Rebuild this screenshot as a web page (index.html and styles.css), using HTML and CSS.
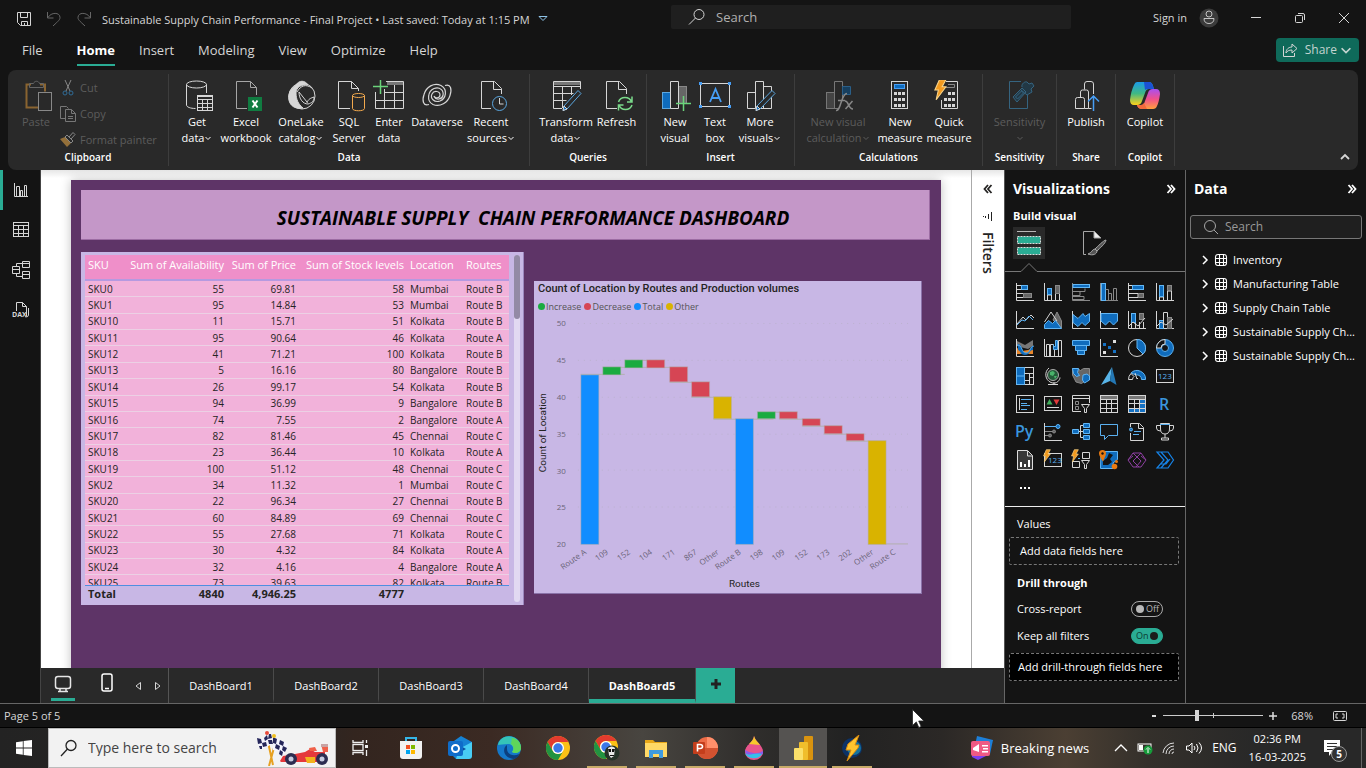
FILE: index.html
```html
<!DOCTYPE html>
<html lang="en">
<head>
<meta charset="utf-8">
<title>Sustainable Supply Chain Performance - Final Project</title>
<link rel="stylesheet" href="styles.css">
</head>
<body>
<svg class="defs" width="0" height="0" aria-hidden="true">
  <symbol id="chev" viewBox="0 0 8 8"><path d="M1.500 3l2.500 2.500L6.500 3" fill="none" stroke="currentColor" stroke-width="1"/></symbol>
  <symbol id="dbl" viewBox="0 0 10 10"><path d="M1.500 1l3.500 4-3.500 4M5 1l3.500 4-3.500 4" fill="none" stroke="currentColor" stroke-width="1.800"/></symbol>
  <symbol id="right" viewBox="0 0 8 10"><path d="M2 1l4 4-4 4" fill="none" stroke="currentColor" stroke-width="1.500"/></symbol>
  <symbol id="grid" viewBox="0 0 14 14"><g fill="none" stroke="currentColor" stroke-width="1.100"><rect x="1.500" y="1.500" width="11" height="11" rx="2.500"/><path d="M5.500 1.500v11M9.500 1.500v11M1.500 5.500h11M1.500 9.500h11"/></g></symbol>
  <symbol id="bolt" viewBox="0 0 12 20"><path d="M5 0.500h6L7.500 7H11L2 19l2-9H.8z" fill="#f29a1f" stroke="#f8d48a" stroke-width="1"/></symbol>
  <symbol id="chrome" viewBox="0 0 24 24"><circle cx="12" cy="12" r="12" fill="#fbc116"/><path d="M1.600 6A12 12 0 0 1 22.400 6H12a6 6 0 0 0-5.200 9z" fill="#e33b2e"/><path d="M1.600 6A12 12 0 0 0 12 24l5.200-9A6 6 0 0 1 6.800 15z" fill="#229342"/><circle cx="12" cy="12" r="6" fill="#fff"/><circle cx="12" cy="12" r="4.700" fill="#3b78e7"/></symbol>
</svg>

<header class="titlebar">
  <div class="title-left">
    <button class="plain" aria-label="Save"><svg width="16" height="16" class="ln"><path d="M1.500 1.500h13v13h-10l-3-3zM4.500 1.500v5h7v-5M5.500 14.500v-4h6v4M8.500 12v2"/></svg></button>
    <button class="plain dim" aria-label="Undo"><svg width="16" height="16" class="ln"><path d="M1.500 1v6h6M2 6.500C5 1 14 1 14 6.500c0 2-1 3-7 8.500"/></svg></button>
    <button class="plain dim" aria-label="Redo"><svg width="16" height="16" class="ln"><path d="M14.500 1v6h-6M14 6.500C11 1 2 1 2 6.500c0 2 1 3 7 8.500"/></svg></button>
    <span class="doc-title">Sustainable Supply Chain Performance - Final Project • Last saved: Today at 1:15 PM</span>
    <svg width="10" height="8" class="ln accent"><path d="M1 1.500h8L5 5.500z"/></svg>
  </div>
  <label class="top-search"><svg width="18" height="18" class="ln"><circle cx="11" cy="6.500" r="5"/><path d="M7.500 10L1 16.500"/></svg><input type="search" placeholder="Search" aria-label="Search"></label>
  <div class="title-right">
    <button class="plain sign">Sign in</button>
    <svg width="20" height="20" class="avatar"><circle cx="10" cy="10" r="9.500" fill="#3b3b3b"/><g fill="none" stroke="#c4c4c4"><circle cx="10" cy="6" r="3"/><path d="M5 10.500h10c0 3.500-2 5-5 5s-5-1.500-5-5z"/></g></svg>
    <button class="plain win" aria-label="Minimize"><svg width="12" height="12" class="ln"><path d="M1 5.500h10"/></svg></button>
    <button class="plain win" aria-label="Restore"><svg width="12" height="12" class="ln"><rect x="1.500" y="3.500" width="7" height="7" rx="1"/><path d="M4 1.500h5q1.500 0 1.500 1.500v5"/></svg></button>
    <button class="plain win" aria-label="Close"><svg width="12" height="12" class="ln"><path d="M1 1l10 10M11 1L1 11"/></svg></button>
  </div>
</header>

<nav class="menu">
  <a href="#" class="file">File</a><a href="#" class="on">Home</a><a href="#">Insert</a><a href="#">Modeling</a><a href="#">View</a><a href="#">Optimize</a><a href="#">Help</a>
  <button class="share"><svg width="16" height="16" class="ln"><path d="M1.500 4v10.500h11V11M4 11c0-4 3-6 6-6V2l5 4.500-5 4.500V8c-3 0-5 1-6 3z"/></svg>Share<svg width="14" height="14"><use href="#chev"/></svg></button>
</nav>

<section class="ribbon" aria-label="Ribbon">
  <div class="group g-clip">
    <div class="tools">
      <button class="tool w-paste off"><svg width="32" height="32" fill="none"><path d="M11 4.500H6.500v23h12M20 4.500h5v7" stroke="#8a6430" stroke-width="2"/><path d="M9.500 7.500v-4h4c1-3 5-3 6 0h4v4z" stroke="#666"/><rect x="18.500" y="12.500" width="13" height="18" fill="#292929" stroke="#888"/></svg><span>Paste</span></button>
      <div class="clip-list">
        <button class="plain"><svg width="16" height="16" fill="none"><path d="M5 0l5 11M11 0L6 11" stroke="#888"/><g stroke="#2f6b96"><circle cx="5" cy="13" r="2"/><circle cx="11" cy="13" r="2"/></g></svg>Cut</button>
        <button class="plain"><svg width="16" height="16" fill="none" stroke="#777"><path d="M5 12.500H.5V.5h6l2 2M5.500 3.500h6l4 4v8h-10zM11.500 3.500v4h4M8 10.500h5M8 12.500h5"/></svg>Copy</button>
        <button class="plain"><svg width="16" height="16" fill="none"><path d="M0 7l5-2 6 6-4 4z" fill="#94703a"/><path d="M5 5l2-2 6 6-2 2zM9 5l4-4.500 2 2L11 7" stroke="#888"/></svg>Format painter</button>
      </div>
    </div>
    <div class="gname">Clipboard</div>
  </div>
  <div class="group g-data">
    <div class="tools">
      <button class="tool w42"><svg width="32" height="32" class="ln"><ellipse cx="15.500" cy="4.500" rx="10" ry="3.500"/><path d="M5.500 4.500V25c0 2 4 3.500 9 3.500M25.500 4.500V13"/><rect x="16.500" y="15.500" width="15" height="15" fill="#292929"/><path d="M16.500 16.500h15M16.500 19.500h15M16.500 23.500h15M16.500 27.500h15M21.500 19v11M26.500 19v11"/></svg><span>Get<br>data<svg class="chev"><use href="#chev"/></svg></span></button>
      <button class="tool w56"><svg width="32" height="32" class="ln gray"><path d="M17 28.500H6.500v-27h14l6 6V15M20.500 1.500v6h6"/><rect x="18" y="17" width="14" height="14" fill="#107c41" stroke="none"/><path d="M22.500 20.500l5 7M27.500 20.500l-5 7" stroke="#fff" stroke-width="2"/></svg><span>Excel<br>workbook</span></button>
      <button class="tool w54"><svg width="32" height="32" class="ln"><circle cx="17" cy="16" r="13"/><path d="M11 5C14 0 20 0 23 5c-6-1-12 2-12 8 0 6 2 11 7 15C8 30 2 23 4 14c1-4 4-7 7-9z" fill="#d6d6d6"/><path d="M12 12c4-7 9-8 15-4M14 12c0 7 4 12 9 12 4-1 6-3 6-7-3 1-6 2-7 6M14 12l8 10"/></svg><span>OneLake<br>catalog<svg class="chev"><use href="#chev"/></svg></span></button>
      <button class="tool w42"><svg width="32" height="32" class="ln"><path d="M17 28.500H5.500v-27h13l7 7V11M18.500 1.500v7h7"/><g stroke="#f2a94e"><ellipse cx="25.500" cy="15.500" rx="6" ry="2"/><path d="M19.500 15.500v13c0 3 12 3 12 0v-13"/></g></svg><span>SQL<br>Server</span></button>
      <button class="tool w38"><svg width="32" height="32" class="ln"><path d="M13 1.500h17.500v27H2.500V12M3 20.500h27M11 12.500h19M11.500 9v19M21.500 5v23"/><path d="M14 3.500h16" stroke="#777" stroke-width="3"/><path d="M0 6.500h15M7.500 0v14" stroke="#6bd47b" stroke-width="1.500"/></svg><span>Enter<br>data</span></button>
      <button class="tool w58"><svg width="32" height="32" class="ln"><path d="M8 24.500c-6 2-7-4-5-10C5 7 13 2 20 5.500c7 4 5 13-1 15.500-6 2-10-3-8-7 2-4 8-3 8 1 0 3-5 4-6 1M24 5.500c6-2 7 4 5 10-2 7-10 12-17 9C5 21 7 11 13 8.500c6-2 10 2 9 7-1 4-7 5-9 1" stroke-width="1.200"/></svg><span>Dataverse</span></button>
      <button class="tool w50"><svg width="32" height="32" class="ln"><path d="M16 28.500H6.500v-27h13l7 7V14M18.500 1.500v8h8"/><g stroke="#5ba7e0"><circle cx="24.500" cy="23.500" r="7"/></g><path d="M24.500 18v6h4"/></svg><span>Recent<br>sources<svg class="chev"><use href="#chev"/></svg></span></button>
    </div>
    <div class="gname">Data</div>
  </div>
  <div class="group g-query">
    <div class="tools">
      <button class="tool w54"><svg width="32" height="32" class="ln"><path d="M12 28.500H3.500v-27h27V9" /><path d="M4 3.500h26" stroke="#777" stroke-width="3"/><path d="M3.500 6.500h27M3.500 13.500h20M3.500 20.500h13M12.500 6v22M21.500 6v9"/><path d="M14 26L28 10.500l3 3L17 29l-4 1.500z" stroke="#5ba7e0" fill="#292929"/><path d="M14 26l3 3-4 1.500z" fill="#0f6cbd"/></svg><span>Transform<br>data<svg class="chev"><use href="#chev"/></svg></span></button>
      <button class="tool w47"><svg width="32" height="32" class="ln"><path d="M16 28.500H5.500v-27h13l7 7V14M17.500 1.500v8h8"/><g stroke="#7ad98a" stroke-width="1.500"><path d="M17.500 22c2-6 11-6 13 0M31 16.500V22h-5M31 25c-2 6-11 6-13 0M17.500 30.500V25h5"/></g></svg><span>Refresh</span></button>
    </div>
    <div class="gname">Queries</div>
  </div>
  <div class="group g-insert">
    <div class="tools">
      <button class="tool w40"><svg width="32" height="32" class="ln"><rect x="3.500" y="12.500" width="8" height="16" fill="#0f6cbd" stroke="#5ba7e0"/><rect x="19.500" y="6.500" width="8" height="17" fill="#666" stroke="#888"/><path d="M11.500 28.500v-27h8v27z" fill="#292929"/><path d="M17 23.500h15M24.500 16v15" stroke="#6bd47b" stroke-width="1.500"/></svg><span>New<br>visual</span></button>
      <button class="tool w40"><svg width="32" height="32" class="ln"><rect x="1.500" y="3.500" width="29" height="23"/><path d="M11 22l5.500-13L22 22M13 18h7" stroke="#479ef5" stroke-width="1.800"/><g fill="#479ef5" stroke="none"><path d="M0 2h3v3H0zM29 2h3v3h-3zM0 25h3v3H0zM29 25h3v3h-3z"/></g></svg><span>Text<br>box</span></button>
      <button class="tool w50"><svg width="32" height="32" class="ln"><path d="M3.500 28.500v-16h8v16zM11.500 28.500v-27h8v27M19.500 6.500h8v22h-14"/><path d="M13 26L28 10.500l3 3L16 29l-4 1.500z" stroke="#5ba7e0" fill="#292929"/><path d="M13 26l3 3-4 1.500z" fill="#0f6cbd"/></svg><span>More<br>visuals<svg class="chev"><use href="#chev"/></svg></span></button>
    </div>
    <div class="gname">Insert</div>
  </div>
  <div class="group g-calc">
    <div class="tools">
      <button class="tool w74 off"><svg width="32" height="32" class="ln"><g stroke="#777"><rect x="4.500" y="12.500" width="8" height="16" fill="#444"/><path d="M16 28.500h-3.500v-27h8v17"/></g><path d="M20.500 6.500h8v8h-8z" fill="#173f5f" stroke="#2a5f88"/><path d="M14 30.500c5 1 5-17 11-17M16 20.500h7M23 21c4 0 3 8 8 8M30.500 21l-7 8" stroke="#888" stroke-width="1.500"/></svg><span>New visual<br>calculation<svg class="chev"><use href="#chev"/></svg></span></button>
      <button class="tool w50"><svg width="32" height="32" class="ln"><rect x="7.500" y="1.500" width="16" height="27"/><rect x="10.500" y="4.500" width="10" height="4" fill="#0f6cbd" stroke="#479ef5"/><path d="M10 13.500h3m1 0h3m1 0h3M10 19.500h3m1 0h3m1 0h3M10 25.500h3m1 0h3m1 0h3" stroke-width="3"/></svg><span>New<br>measure</span></button>
      <button class="tool w48"><svg width="32" height="32" class="ln"><path d="M13 1.500h11.500v27h-16V20"/><path d="M13 7.500h8.500v-3H15" stroke="#888"/><path d="M15 13.500h3m1 0h3M11 19.500h3m1 0h3m1 0h3M11 25.500h3m1 0h3m1 0h3" stroke-width="3"/><use href="#bolt" x="1" y="-1" width="13" height="22" stroke="none"/></svg><span>Quick<br>measure</span></button>
    </div>
    <div class="gname">Calculations</div>
  </div>
  <div class="group g-sens">
    <div class="tools center">
      <button class="tool off"><svg width="32" height="32" fill="none" stroke="#356480"><path d="M17 1.500H5.500v27h18V15"/><path d="M9 17l9-9 4 4-9 10zM11.500 17l6-6 2 2-6 6zM18 7c-1-3 3-6 5-5l2 2 3-1 2 3-3 3 1 3-5 3-6-5" fill="#223845"/></svg><span>Sensitivity<br><svg class="chev"><use href="#chev"/></svg></span></button>
    </div>
    <div class="gname">Sensitivity</div>
  </div>
  <div class="group g-one">
    <div class="tools center">
      <button class="tool"><svg width="32" height="32" class="ln"><path d="M5.500 28.500v-9q0-2 2-2h5q2 0 2 2v9zM10.500 17v-5q0-2 2-2h4q2 0 2 2v16.500h-4M14.500 9.500V4q0-2.500 2.500-2.500h4Q23.500 1.500 23.500 4v10M18.500 28.500h3"/><path d="M23.500 31V16M18 21.500l5.500-5.500 5.500 5.500" stroke="#479ef5" stroke-width="1.500"/></svg><span>Publish</span></button>
    </div>
    <div class="gname">Share</div>
  </div>
  <div class="group g-one">
    <div class="tools center">
      <button class="tool"><svg width="32" height="32"><defs><linearGradient id="cpa" x1="0" y1="0" x2="0" y2="1"><stop offset="0" stop-color="#1a9ae8"/><stop offset=".5" stop-color="#3fb984"/><stop offset="1" stop-color="#ffd21a"/></linearGradient><linearGradient id="cpb" x1="0" y1="0" x2="0" y2="1"><stop offset="0" stop-color="#a94ff0"/><stop offset=".5" stop-color="#f0508c"/><stop offset="1" stop-color="#ffa03c"/></linearGradient></defs><path d="M8 2h12q3 0 4 4l1 3h-5q-3 0-4 4l-3 8q-1 4-5 4H5q-4 0-4-5 1-9 4-15 1-3 3-3z" fill="url(#cpa)"/><path d="M24 29H13q-4 0-5-4h4q3 0 4-4l3-8q1-4 5-4h3q4 0 4 5-1 8-3 12-1 3-4 3z" fill="url(#cpb)"/><path d="M15 2h5q3 0 4 4l1 3h-5q-3 0-4 1z" fill="#1b51d4"/><path d="M8 25h4q2 0 3-2l3 6h-5q-4 0-5-4z" fill="#f36a3c"/></svg><span>Copilot</span></button>
    </div>
    <div class="gname">Copilot</div>
  </div>
  <button class="plain collapse" aria-label="Collapse ribbon"><svg width="10" height="10" class="ln"><path d="M1 7l4-4 4 4" stroke-width="1.800"/></svg></button>
</section>

<main class="work">
  <nav class="views">
    <button class="plain on" aria-label="Report view"><svg width="18" height="18" class="ln"><path d="M2.500 2v13.500H16M4.500 15V5.500h3V15M8.500 15V9.500h2V15M12.500 15V4.500h2V15"/></svg></button>
    <button class="plain" aria-label="Table view"><svg width="18" height="18" class="ln"><rect x="1.500" y="1.500" width="15" height="14"/><path d="M1.500 4.500h15M1.500 8.500h15M1.500 12.500h15M6.500 4v11M11.500 4v11"/></svg></button>
    <button class="plain" aria-label="Model view"><svg width="20" height="20" class="ln"><path d="M1.500 6.500h7v7h-7zM1.500 9.500h7M11.500 1.500h7v6h-7zM11.500 3.500h7M11.500 11.500h7v7h-7zM11.500 14.500h7M5.500 6V3.500h6M5.500 14v2.500h6"/></svg></button>
    <button class="plain" aria-label="DAX query view"><svg width="20" height="20" class="ln"><path d="M5.500 11V2.500h6l4 4V16M11.500 2.500v4h4M17.500 8v7q0 2-3 2"/><text x="1" y="17" class="dax">DAX</text></svg></button>
  </nav>

  <div class="center-col">
    <div class="stage">
      <div class="canvas">
        <article class="report">
          <h1 class="banner">SUSTAINABLE SUPPLY  CHAIN PERFORMANCE DASHBOARD</h1>
          <div class="visuals">
            <section class="tbl-visual">
              <div class="tbl-scroll">
                <table>
                  <colgroup><col class="c1"><col class="c2"><col class="c3"><col class="c4"><col class="c5"><col class="c6"></colgroup>
                  <thead><tr><th class="l">SKU</th><th>Sum of Availability</th><th>Sum of Price</th><th>Sum of Stock levels</th><th class="l">Location</th><th class="l">Routes</th></tr></thead>
                  <tbody>
                    <tr><td>SKU0</td><td>55</td><td>69.81</td><td>58</td><td>Mumbai</td><td>Route B</td></tr>
                    <tr><td>SKU1</td><td>95</td><td>14.84</td><td>53</td><td>Mumbai</td><td>Route B</td></tr>
                    <tr><td>SKU10</td><td>11</td><td>15.71</td><td>51</td><td>Kolkata</td><td>Route B</td></tr>
                    <tr><td>SKU11</td><td>95</td><td>90.64</td><td>46</td><td>Kolkata</td><td>Route A</td></tr>
                    <tr><td>SKU12</td><td>41</td><td>71.21</td><td>100</td><td>Kolkata</td><td>Route B</td></tr>
                    <tr><td>SKU13</td><td>5</td><td>16.16</td><td>80</td><td>Bangalore</td><td>Route B</td></tr>
                    <tr><td>SKU14</td><td>26</td><td>99.17</td><td>54</td><td>Kolkata</td><td>Route B</td></tr>
                    <tr><td>SKU15</td><td>94</td><td>36.99</td><td>9</td><td>Bangalore</td><td>Route B</td></tr>
                    <tr><td>SKU16</td><td>74</td><td>7.55</td><td>2</td><td>Bangalore</td><td>Route A</td></tr>
                    <tr><td>SKU17</td><td>82</td><td>81.46</td><td>45</td><td>Chennai</td><td>Route C</td></tr>
                    <tr><td>SKU18</td><td>23</td><td>36.44</td><td>10</td><td>Kolkata</td><td>Route A</td></tr>
                    <tr><td>SKU19</td><td>100</td><td>51.12</td><td>48</td><td>Chennai</td><td>Route C</td></tr>
                    <tr><td>SKU2</td><td>34</td><td>11.32</td><td>1</td><td>Mumbai</td><td>Route C</td></tr>
                    <tr><td>SKU20</td><td>22</td><td>96.34</td><td>27</td><td>Chennai</td><td>Route B</td></tr>
                    <tr><td>SKU21</td><td>60</td><td>84.89</td><td>69</td><td>Chennai</td><td>Route C</td></tr>
                    <tr><td>SKU22</td><td>55</td><td>27.68</td><td>71</td><td>Kolkata</td><td>Route C</td></tr>
                    <tr><td>SKU23</td><td>30</td><td>4.32</td><td>84</td><td>Kolkata</td><td>Route A</td></tr>
                    <tr><td>SKU24</td><td>32</td><td>4.16</td><td>4</td><td>Bangalore</td><td>Route A</td></tr>
                    <tr><td>SKU25</td><td>73</td><td>39.63</td><td>82</td><td>Kolkata</td><td>Route B</td></tr>
                  </tbody>
                  <tfoot><tr><td>Total</td><td>4840</td><td>4,946.25</td><td>4777</td><td></td><td></td></tr></tfoot>
                </table>
              </div>
              <div class="track"><div class="thumb"></div></div>
            </section>
            <section class="chart-visual">
              <h2>Count of Location by Routes and Production volumes</h2>
              <ul class="legend"><li class="inc">Increase</li><li class="dec">Decrease</li><li class="tot">Total</li><li class="oth">Other</li></ul>
              <svg class="chart" viewBox="0 36 388 276" role="img" aria-label="Waterfall chart">
                <g class="gridline"><path d="M44 42.500h332M44 79.500h332M44 116.500h332M44 153.500h332M44 189.500h332M44 226.500h332"/></g>
                <g class="ylab"><text x="32" y="45">50</text><text x="32" y="82">45</text><text x="32" y="119">40</text><text x="32" y="156">35</text><text x="32" y="193">30</text><text x="32" y="230">25</text><text x="32" y="267">20</text></g>
                <path class="link" d="M47 93.500h44M69 86.500h44M91 79.500h40M114 86.500h40M136 101.500h40M158 116.500h40M180 138.500h60M224 131.500h40M246 138.500h40M269 145.500h40M291 153.500h40M313 160.500h40M335 263.500h40"/>
                <g class="tot"><rect x="47" y="94" width="18" height="170"/><rect x="202" y="138" width="18" height="126"/></g>
                <g class="inc"><rect x="69" y="86" width="18" height="8"/><rect x="91" y="79" width="18" height="8"/><rect x="224" y="131" width="18" height="7"/></g>
                <g class="dec"><rect x="113" y="79" width="18" height="8"/><rect x="136" y="86" width="18" height="15"/><rect x="158" y="101" width="18" height="15"/><rect x="246" y="131" width="18" height="7"/><rect x="269" y="138" width="18" height="7"/><rect x="291" y="145" width="18" height="8"/><rect x="313" y="153" width="18" height="7"/></g>
                <g class="oth"><rect x="180" y="116" width="18" height="22"/><rect x="335" y="160" width="18" height="104"/></g>
                <g class="xlab">
                  <text transform="translate(53 273) rotate(-35)">Route A</text><text transform="translate(75 273) rotate(-35)">109</text><text transform="translate(97 273) rotate(-35)">152</text><text transform="translate(119 273) rotate(-35)">104</text><text transform="translate(142 273) rotate(-35)">171</text><text transform="translate(164 273) rotate(-35)">867</text><text transform="translate(186 273) rotate(-35)">Other</text><text transform="translate(208 273) rotate(-35)">Route B</text><text transform="translate(230 273) rotate(-35)">198</text><text transform="translate(252 273) rotate(-35)">109</text><text transform="translate(275 273) rotate(-35)">152</text><text transform="translate(297 273) rotate(-35)">173</text><text transform="translate(319 273) rotate(-35)">202</text><text transform="translate(341 273) rotate(-35)">Other</text><text transform="translate(363 273) rotate(-35)">Route C</text>
                </g>
                <text class="axis" x="211" y="307">Routes</text>
                <text class="axis" transform="translate(12 152) rotate(-90)">Count of Location</text>
              </svg>
            </section>
          </div>
        </article>
      </div>
      <aside class="filters">
        <button class="plain" aria-label="Expand filters"><svg width="10" height="10" class="flip"><use href="#dbl"/></svg></button>
        <svg width="10" height="10" fill="none" stroke="#222"><path d="M8.500 0v9M5.500 2v5M2.500 4v2M0 4.500h1"/></svg>
        <span>Filters</span>
      </aside>
    </div>
    <div class="tabs">
      <div class="tab-tools">
        <button class="plain desk" aria-label="Desktop layout"><svg width="18" height="18" fill="none" stroke="#e6e6e6" stroke-width="1.500"><rect x="1.500" y="1.500" width="15" height="12" rx="2.500"/><path d="M6 14v2M12 14v2M4 16.500h10"/></svg></button>
        <button class="plain phone" aria-label="Mobile layout"><svg width="12" height="20" fill="none" stroke="#fff" stroke-width="1.500"><rect x="1" y="1" width="10" height="17" rx="2"/><path d="M4 15.500h4"/></svg></button>
        <button class="plain" aria-label="Previous page"><svg width="6" height="10" class="ln"><path d="M5.500 1.500v7L1 5z"/></svg></button>
        <button class="plain" aria-label="Next page"><svg width="6" height="10" class="ln"><path d="M.5 1.500v7L5 5z"/></svg></button>
      </div>
      <button class="tab">DashBoard1</button><button class="tab">DashBoard2</button><button class="tab">DashBoard3</button><button class="tab">DashBoard4</button><button class="tab on">DashBoard5</button>
      <button class="add" aria-label="New page"><svg width="12" height="12"><path d="M6 1v10M1 6h10" stroke="#222" stroke-width="3"/></svg></button>
    </div>
  </div>

  <aside class="pane viz">
    <header><h2>Visualizations</h2><button class="plain" aria-label="Collapse"><svg width="10" height="10"><use href="#dbl"/></svg></button></header>
    <h3>Build visual</h3>
    <div class="modes">
      <button class="plain on" aria-label="Build visual"><svg width="32" height="32" fill="none"><path d="M4 4.500h19" stroke="#b8b8b8"/><g fill="#2aac94" stroke="#ddd" stroke-dasharray="2 1"><rect x="4.500" y="9.500" width="23" height="7"/><rect x="4.500" y="20.500" width="23" height="7"/></g></svg></button>
      <button class="plain" aria-label="Format visual"><svg width="32" height="32" class="ln gray"><path d="M9 27.500H6.500v-23h11l6 6"/><path d="M17 4l7 7h-7z" fill="#eee"/><path d="M29 13c-2 0-9 7-11 9l2 2c2-2 9-8 9-11zM18 22c-3 0-3 4-7 5 5 2 9 0 9-3" fill="#555"/></svg></button>
    </div>
    <svg class="notch" viewBox="0 0 180 12" preserveAspectRatio="xMinYMin slice" fill="none" stroke="#777"><path d="M0 8.500h16l8-8 8 8h400"/></svg>
    <div class="gallery">
      <svg viewBox="0 0 18 18"><path class="w" d="M.5 0v17.500H18"/><rect class="f" x="5.500" y="2.500" width="6" height="4"/><path class="w" d="M1 2.500h4M1 6.500h4M1 10.500h6M1 14.500h6"/><rect class="g" x="7.500" y="10.500" width="8" height="4"/></svg>
      <svg viewBox="0 0 18 18"><path class="w" d="M.5 0v17.500H18M3.500 17v-5h4v5M11.500 17V9h4v8"/><rect class="f" x="3.500" y="5.500" width="4" height="6"/><rect class="g" x="11.500" y="2.500" width="4" height="8"/></svg>
      <svg viewBox="0 0 18 18"><path class="w dimw" d="M.5 0v17.500H18"/><rect class="f" x="1" y="1.500" width="16.500" height="3"/><path class="g2" d="M1 8.500h12v-3M1 12.500h7v-4M1 16.500h11v-3H1"/></svg>
      <svg viewBox="0 0 18 18"><path class="w dimw" d="M.5 0v17.500H18"/><rect class="f" x="1.500" y=".5" width="4" height="17"/><path class="g2" d="M5.500 6.500h3V17M8.500 10.500h3V17M13.500 17V5.500h3V17"/></svg>
      <svg viewBox="0 0 18 18"><path class="w" d="M.5 0v17.500H18"/><rect class="f" x="4.500" y="2.500" width="11" height="4"/><path class="w" d="M1 2.500h3M1 6.500h3M1 10.500h9v4H1"/><rect class="g" x="10.500" y="10.500" width="5" height="4"/></svg>
      <svg viewBox="0 0 18 18"><path class="w" d="M.5 0v17.500H18M3.500 17v-3h4v3M11.500 17V8h4v9"/><rect class="f" x="3.500" y="2.500" width="4" height="11"/><rect class="g" x="11.500" y="2.500" width="4" height="5"/></svg>

      <svg viewBox="0 0 18 18"><path class="w" d="M.5 0v17.500H18M1 13l6-7 3 3 5-5 3 3"/><path class="b" d="M1 14l5-5 3 1 4-5 4 4"/></svg>
      <svg viewBox="0 0 18 18"><path class="g" d="M9 9l4-8 4.500 9v7z"/><path class="w" d="M.5 11L7 1l6 9"/><path class="f" d="M.5 17.500v-4l4-4 4 3 3-3 6 8z"/></svg>
      <svg viewBox="0 0 18 18"><path class="w" d="M.5 0v17.500H18"/><path class="f" d="M1 3.500l5 4 5-5 2 3 4.500-3v8l-4.500 4-3-3-4 4-5-4z"/></svg>
      <svg viewBox="0 0 18 18"><path class="w" d="M.5 0v17.500H18"/><path class="f" d="M1 2.500h16.500V10l-4 4-4-4-4 4L1 10z"/></svg>
      <svg viewBox="0 0 18 18"><path class="w" d="M.5 0v17.500H18M3.500 17v-5M7.500 17v-5M11.500 17v-6M15.500 17v-6"/><rect class="f" x="3.500" y="2.500" width="4" height="9"/><rect class="g" x="11.500" y="2.500" width="4" height="6"/><path class="w" d="M1 15l4-4 5 4 7-8"/></svg>
      <svg viewBox="0 0 18 18"><path class="w" d="M.5 0v17.500H18"/><rect class="f" x="3.500" y="9.500" width="4" height="8"/><path class="w" d="M7.500 17V1.500h4V17"/><rect class="g" x="11.500" y="6.500" width="4" height="11"/><path class="w" d="M1 15l4-4 5 3 7-6"/></svg>

      <svg viewBox="0 0 18 18"><path d="M1 2l8 4 8-5v6l-5 3-4-1-7-2z" fill="#777"/><path d="M1 9l5 3 6-1 5-2v6H1z" fill="#e8862a"/><path d="M2 5c5 0 3 9 8 9s3-6 7-7v4c-4 0-3 5-8 5S5 12 2 11z" fill="#0f6cbd"/><path class="b" d="M1 6c6 0 4 8 9 8s3-6 8-7"/><path class="w" d="M.5 0v17.500H18"/></svg>
      <svg viewBox="0 0 18 18"><path class="w" d="M.5 0v17.500H18M2.500 17V5.500h3V17M6.500 17V5.500h3M10.500 17v-6M14.500 17V1.500h3V17"/><path class="f" d="M9.500 5.500v5h4v-9h-2v6h-2z"/></svg>
      <svg viewBox="0 0 18 18"><path class="f" d="M.5 1.500h17v5H.5zM3.500 6.500h11v5h-11zM5.500 11.500h7v4h-7z"/></svg>
      <svg viewBox="0 0 18 18"><path class="w" d="M.5 0v17.500H18"/><path d="M3 4h3v3H3zM8 7h3v3H8zM13 11h3v3h-3z" fill="#1672c4"/><path d="M13 1h3v3h-3zM3 12h3v3H3z" fill="#ddd"/></svg>
      <svg viewBox="0 0 18 18"><circle class="w" cx="9" cy="9" r="8.500"/><path class="f" d="M9 .5A8.500 8.500 0 0 1 15 15L9 9z"/></svg>
      <svg viewBox="0 0 18 18"><circle cx="9" cy="9" r="6" fill="none" stroke="#0f6cbd" stroke-width="5"/><circle class="b" cx="9" cy="9" r="8.500"/><circle class="b" cx="9" cy="9" r="3.500"/><path d="M9 .5A8.500 8.500 0 0 0 .5 9H5a4 4 0 0 1 4-4z" fill="#141414" stroke="#d6d6d6"/></svg>

      <svg viewBox="0 0 18 18"><rect class="w" x=".5" y=".5" width="17" height="17"/><path class="f" d="M.5 .5h8v17h-8zM.5 9h8"/><path class="w" d="M8.500 6.500h9M13.500 7v11M9 13.500h4M14 10.500h4"/></svg>
      <svg viewBox="0 0 18 18"><circle cx="9" cy="8" r="5.500" fill="#245b39" stroke="#aaa"/><path d="M6 5l3-1 2 2-2 3-3-1zM10 9l3 0-2 3z" fill="#49b36a"/><path class="w" d="M5 1C0 5 1 13 7 15.500s9-3 9-5M10 15v2M4 17.500h10"/></svg>
      <svg viewBox="0 0 18 18"><path class="g" d="M.5 1.500h5l3 2 3-2h6V11l-8 5.500L4 15 .5 8z"/><path class="f" d="M.5 1.500h6l-1 4 2 3-3 1-3-3zM11 8l4-1 2.500 2v4l-5 3-2-3z"/></svg>
      <svg viewBox="0 0 18 18"><path d="M12 0L1 18l9-4z" fill="#58b4e8"/><path d="M12 0l4.500 18L10 14z" fill="#2478b5"/></svg>
      <svg viewBox="0 0 18 18"><path class="f" d="M3 6a8.500 8.500 0 0 1 14.500 6.500h-4A4.500 4.500 0 0 0 8 8z"/><path class="w" d="M.5 12.500A8 8 0 0 1 3 6.500l3 3a4 4 0 0 0-1.500 3zM7 6l2 6 1-1"/></svg>
      <svg viewBox="0 0 18 18"><rect class="w" x=".5" y="2.500" width="17" height="13"/><text x="2" y="12" class="num">123</text></svg>

      <svg viewBox="0 0 18 18"><rect class="w" x=".5" y=".5" width="17" height="17"/><path class="w" d="M3.500 3v12"/><path class="b" d="M5 4.500h10M5 8.500h6M5 10.500h9M5 14.500h6"/></svg>
      <svg viewBox="0 0 18 18"><rect class="w" x=".5" y="1.500" width="17" height="14"/><path d="M2.500 9.500L5.500 4l3 5.500z" fill="#3fae5a"/><path d="M9.500 4.500h6l-3 5.500z" fill="#e03a3a"/><path class="w" d="M3 12.500h12"/></svg>
      <svg viewBox="0 0 18 18"><path class="w" d="M9 16.500H.5V.5h17V8M.5 3.500h17"/><path class="g2" d="M3.500 6.500h3v3h-3zM3.500 11.500h3v3h-3z"/><path class="w" d="M9.500 9.500h8l-3 4v4h-2v-4z"/></svg>
      <svg viewBox="0 0 18 18"><rect x="1" y="1" width="16" height="3" fill="#777"/><rect class="w" x=".5" y=".5" width="17" height="17"/><path class="w" d="M.5 4.500h17M.5 8.500h17M.5 13.500h17M6.500 4v13M11.500 4v13"/></svg>
      <svg viewBox="0 0 18 18"><rect x="1" y="1" width="16" height="3" fill="#777"/><path d="M12 4h5v13H1v-4h11z" fill="#1672c4"/><rect class="w" x=".5" y=".5" width="17" height="17"/><path class="w" d="M.5 4.500h17M.5 8.500h17M.5 13.500h17M6.500 4v13M11.500 4v13"/></svg>
      <svg viewBox="0 0 18 18"><text x="3" y="15" class="lang">R</text></svg>

      <svg viewBox="0 0 18 18"><text x="-1" y="14" class="lang">Py</text></svg>
      <svg viewBox="0 0 18 18"><path class="w" d="M.5 0v17.500H18"/><path class="b" d="M1 3.500h11"/><circle class="f" cx="14" cy="3.500" r="2"/><path class="g2" d="M1 8.500h8M1 12.500h4"/><circle class="g" cx="10" cy="8.500" r="1.500"/><circle class="g" cx="6" cy="12.500" r="1.500"/></svg>
      <svg viewBox="0 0 18 18"><path class="w" d="M6 8.500h5M8.500 8V2.500H11M8.500 9v5.500H11"/><path class="f" d="M.5 6.500h6v4h-6zM11.500 .5h6v4h-6zM11.500 6.500h6v4h-6zM11.500 12.500h6v4h-6z"/></svg>
      <svg viewBox="0 0 18 18"><path class="b" d="M.5 1.500h17v11h-9l-4 4v-4h-4z"/></svg>
      <svg viewBox="0 0 18 18"><path class="w" d="M2.500 4V.5h9l4 4v13h-13V10M10.500 .5v5h5"/><circle class="f" cx="3" cy="6.500" r="1.500"/><path class="b" d="M6 8.500h7M5 11.500h6"/></svg>
      <svg viewBox="0 0 18 18"><path class="w" d="M4.500 .5h9V6q0 5-4.500 5T4.500 6zM4.500 2.500h-4V5q0 3 4 3M13.500 2.500h4V5q0 3-4 3M9 11v4M5.500 17v-2h7v2z"/><path class="b" d="M4 1.500h10"/></svg>

      <svg viewBox="0 0 18 18"><path d="M1.500 -.5h10l5 5v14h-15z" fill="#383838" stroke="#ddd"/><path class="w" d="M11.500 0v5h5"/><path d="M4 11h2v5H4zM8 13h2v3H8zM12 9h2v7h-2z" fill="#fff"/></svg>
      <svg viewBox="0 0 18 18"><rect class="w" x=".5" y="2.500" width="17" height="13"/><text x="4" y="12" class="num">123</text><use href="#bolt" x="-1" y="-2" width="8" height="14"/></svg>
      <svg viewBox="0 0 18 18"><path class="w" d="M10.500 1.500h7v6h-7zM.5 10.500h7v6h-7zM9.500 9.500h8l-3 4v4h-2v-4z"/><path class="b" d="M6 7.500h2"/><use href="#bolt" x="-1" y="-2" width="8" height="14"/></svg>
      <svg viewBox="0 0 18 18"><path d="M1 .5h16.500v8L13 12l1 5.500H.5z" fill="#0f6cbd" stroke="#62b6f4"/><path d="M9 2l4 2-3 4 2 3-4 3H3v-4l4-3z" fill="#141414"/><path d="M3 10.500C0 6-1 4-1 2c0-4 7-4 7 0 0 2-1 4-3 8.500z" fill="#e87a12"/><circle cx="2.500" cy="2.500" r="1.200" fill="#141414"/><circle cx="14.500" cy="15.500" r="2.800" fill="#e87a12"/><circle cx="16.500" cy="10.500" r="1.500" fill="#e87a12"/></svg>
      <svg viewBox="0 0 18 18"><g fill="none" stroke="#8c3fa0"><path d="M5 2h8l5 7-5 7H5L0 9zM5 2l8 8-5 6M13 2L5 10l6 6M0 9l5-4M18 9l-5-4"/></g></svg>
      <svg viewBox="0 0 18 18"><g fill="none" stroke="#1683e8" stroke-width="1.200"><path d="M1 1h11l5.500 8-5.500 8H1l7-8zM5 1l7 8-7 8M4 13h6l4-5"/></g></svg>
      <svg viewBox="0 0 18 18"><path d="M4 8h2v2H4zM8 8h2v2H8zM12 8h2v2h-2z" fill="#fff"/></svg>
    </div>
    <div class="wells">
      <h4>Values</h4>
      <div class="drop">Add data fields here</div>
      <h4 class="strong">Drill through</h4>
      <label class="switch-row">Cross-report<span class="switch"><input type="checkbox"><i>Off</i></span></label>
      <label class="switch-row">Keep all filters<span class="switch"><input type="checkbox" checked><i>On</i></span></label>
      <div class="drop dark">Add drill-through fields here</div>
    </div>
  </aside>

  <aside class="pane data">
    <header><h2>Data</h2><button class="plain" aria-label="Collapse"><svg width="10" height="10"><use href="#dbl"/></svg></button></header>
    <label class="data-search"><svg width="16" height="16" class="ln gray"><circle cx="7" cy="7" r="5.500"/><path d="M11 11l4 4"/></svg><input type="search" placeholder="Search" aria-label="Search fields"></label>
    <ul class="fields">
      <li><svg width="8" height="10"><use href="#right"/></svg><svg width="14" height="14"><use href="#grid"/></svg><span>Inventory</span></li>
      <li><svg width="8" height="10"><use href="#right"/></svg><svg width="14" height="14"><use href="#grid"/></svg><span>Manufacturing Table</span></li>
      <li><svg width="8" height="10"><use href="#right"/></svg><svg width="14" height="14"><use href="#grid"/></svg><span>Supply Chain Table</span></li>
      <li><svg width="8" height="10"><use href="#right"/></svg><svg width="14" height="14"><use href="#grid"/></svg><span>Sustainable Supply Ch...</span></li>
      <li><svg width="8" height="10"><use href="#right"/></svg><svg width="14" height="14"><use href="#grid"/></svg><span>Sustainable Supply Ch...</span></li>
    </ul>
  </aside>
</main>

<footer class="status">
  <span>Page 5 of 5</span>
  <div class="zoom">
    <button class="plain" aria-label="Zoom out"><svg width="6" height="10"><path d="M1 5h4" stroke="#ddd" stroke-width="2"/></svg></button>
    <input type="range" min="10" max="190" value="69" aria-label="Zoom">
    <button class="plain" aria-label="Zoom in"><svg width="8" height="10"><path d="M0 5h8M4 1v8" stroke="#ddd" stroke-width="1.500"/></svg></button>
    <span class="pct">68%</span>
    <button class="plain" aria-label="Fit to page"><svg width="14" height="12" class="ln"><rect x=".5" y="1.500" width="13" height="9" rx="1"/><path d="M5 4H3v4h2M9 4h2v4H9"/></svg></button>
  </div>
</footer>

<footer class="taskbar">
  <button class="plain start" aria-label="Start"><svg width="16" height="16" fill="#fff"><path d="M0 2.200L6.800 1.200V7.600H0zM7.600 1.100L16 0v7.600H7.600zM0 8.400h6.800v6.400L0 13.800zM7.600 8.400H16V16l-8.400-1.100z"/></svg></button>
  <label class="task-search"><svg width="18" height="18" fill="none" stroke="#222" stroke-width="1.300"><circle cx="11" cy="6.500" r="5"/><path d="M7.500 10L1 17"/></svg><input type="search" placeholder="Type here to search" aria-label="Type here to search">
    <svg width="76" height="36" viewBox="0 0 76 36"><path d="M13 12l5 23M20 14l-6 22" stroke="#e6a020" stroke-width="2"/><path d="M2 8q5 3 8-1t5-3l3 10q-4 1-6 3T4 18z" fill="#f4f4ff"/><path d="M18 7l12 5 3 3-4 10-6-4-5-1z" fill="#f4f4ff"/><path d="M2 8l4 1 1 4-4 1zM9 8l3-3 1 4-3 2zM7 13l4-1 1 4-4 1zM14 4h2l1 4-4 1zM13 10h4l1 4h-4zM4 16h3v3H5zM18 7l4 2-1 5-3-1zM25 10l4 2-1 4-4-2zM21 14l4 2-1 4-4-2zM28 16l4 2-2 4-3-2zM25 20l3 2-1 4-3-2z" fill="#25265a"/><circle cx="12" cy="3" r="2" fill="#e84a3a"/><circle cx="19" cy="6" r="2" fill="#f0c020"/><path d="M25 31l3-5 12-2 10-2 5-3 5 3h10v10H26z" fill="#e5383b"/><path d="M54 18l6-1 2 4h-7zM66 14h7v8h-5z" fill="#f0614a"/><path d="M66 14h7v3h-7z" fill="#c9a4a4"/><path d="M50 27h10v6H52z" fill="#f2b21c"/><circle cx="36" cy="29" r="6" fill="#2c2c50"/><circle cx="67" cy="29" r="6" fill="#2c2c50"/><circle cx="36" cy="29" r="2.500" fill="#c7cbe0"/><circle cx="67" cy="29" r="2.500" fill="#c7cbe0"/></svg>
  </label>
  <div class="apps">
    <button class="app" aria-label="Task view"><svg width="18" height="18" fill="none" stroke="#eee" stroke-width="1.300"><path d="M2 1v2.500h10V1M2 16v-2.500h10V16M15.500 1v3M15.500 11v6"/><rect x="2" y="5.500" width="10" height="6"/><path d="M14 7.500h3" stroke-width="3"/></svg></button>
    <button class="app" aria-label="Store"><svg width="24" height="24"><path d="M7 6V2h10v4" fill="none" stroke="#35b6e8" stroke-width="2"/><path d="M1 5h22v15q0 3-3 3H4q-3 0-3-3z" fill="#f2f2f2"/><path d="M7 9h4v4H7z" fill="#f25022"/><path d="M12 9h4v4h-4z" fill="#7fba00"/><path d="M7 14h4v4H7z" fill="#00a4ef"/><path d="M12 14h4v4h-4z" fill="#ffb900"/></svg></button>
    <button class="app" aria-label="Outlook"><svg width="26" height="24"><path d="M4 7l10-7 11 6v14l-4 3H9l-3-3z" fill="#1682d4"/><path d="M12 13L25 6v14q0 3-3 3H9z" fill="#48cdf4"/><path d="M10 8l9 5-9 5z" fill="#0b4fa0"/><rect x="1" y="5" width="15" height="15" rx="2" fill="#0f6cc9"/><circle cx="8.500" cy="12.500" r="3.500" fill="none" stroke="#fff" stroke-width="2"/></svg></button>
    <button class="app" aria-label="Edge"><svg width="24" height="24"><circle cx="12" cy="12" r="12" fill="#1578c9"/><path d="M1 9C3-3 22-3 24 11c0 6-6 7-9 5 3-4 0-8-4-8S3 9 1 9z" fill="#35c4b8"/><path d="M15 2c7 1 9 6 9 10 0 5-6 6-9 4 3-3 1-7-1-8z" fill="#5fd65a"/><path d="M10 9c-5 3-4 13 7 14 3-1 5-3 5-5-6 3-12 0-12-5z" fill="#0c3f7d"/></svg></button>
    <button class="app" aria-label="Chrome"><svg width="24" height="24"><use href="#chrome"/></svg></button>
    <button class="app run" aria-label="Chrome profile"><svg width="26" height="26"><use href="#chrome" width="24" height="24"/><circle cx="18" cy="18" r="7.500" fill="#263329"/><path d="M14 13q4-3 7 0l-1 8-3 2-2-3z" fill="#e9e9e9"/><path d="M14 14h3v3h-2zM18 14h3l-1 3h-2zM16 20l4 0v1h-4z" fill="#111"/></svg></button>
    <button class="app run" aria-label="File Explorer"><svg width="24" height="24"><path d="M1 4h8l2 2h12v14H1z" fill="#e8a718"/><path d="M1 7h22v14H1z" fill="#ffd866"/><path d="M5 22v-8h14v8h-4v-4H9v4z" fill="#3f9be0"/></svg></button>
    <button class="app run" aria-label="PowerPoint"><svg width="26" height="24"><circle cx="15" cy="12" r="11" fill="#ed6c47"/><path d="M15 1a11 11 0 0 1 11 11H15z" fill="#ff8f6b"/><path d="M4 12h22a11 11 0 0 1-22 0z" fill="#d35230"/><rect x="1" y="6" width="12" height="12" rx="1" fill="#c43e1c"/><path d="M5.500 15.500V8.500h2.500q2.500 0 2.500 2t-2.500 2H5.500" fill="none" stroke="#fff" stroke-width="1.600"/></svg></button>
    <button class="app run" aria-label="Paint app"><svg width="20" height="26"><path d="M10 1c1 5 9 9 9 16a9 8 0 0 1-18 0C1 10 9 8 10 1z" fill="#e8548c"/><path d="M10 1c1 4 4 6 6 9L5 9c3-3 5-5 5-8z" fill="#f7c92b"/><path d="M4 10q6 5 14 3l1 5-8 3-10-5z" fill="#e8548c"/><path d="M1 15q9 6 18 1l0 3-8 3-9-3z" fill="#8c5be8"/><path d="M1 18c5 4 8-1 17 1a9 7 0 0 1-17-1z" fill="#35c0ea"/></svg></button>
    <button class="app run cur" aria-label="Power BI"><svg width="22" height="26"><rect x="12" y="1" width="9" height="24" rx="1" fill="#d9930f"/><rect x="7" y="7" width="9" height="18" rx="1" fill="#f0be2c"/><rect x="2" y="13" width="9" height="12" rx="1" fill="#fbe06a"/></svg></button>
    <button class="app run" aria-label="Charger"><svg width="22" height="26"><circle cx="11" cy="13" r="10" fill="#0c3266"/><circle cx="13" cy="13" r="7" fill="#14739e"/><path d="M18 0L7 9l-2 6h5L6 26 17 13l1-3h-4z" fill="#ffc52e" stroke="#d98a10"/></svg></button>
  </div>
  <div class="tray">
    <button class="plain news"><svg width="26" height="24"><path d="M9 0l16 4-3 14L6 14z" fill="#1d7fd8"/><path d="M4 12l14 8-8 4-6-3z" fill="#7a3ff0"/><rect x="3" y="5" width="19" height="15" rx="2" fill="#ef5a84"/><path d="M5 12l6-4v8l-6-2zM14 9h6v1.500h-6zM15 12h5v1.500h-5zM14 15h6v1.500h-6z" fill="#fff"/></svg>Breaking news</button>
    <button class="plain" aria-label="Show hidden icons"><svg width="14" height="10" fill="none" stroke="#fff" stroke-width="1.300"><path d="M1 8l6-6 6 6"/></svg></button>
    <svg width="16" height="14" fill="none"><rect x="1" y="3" width="13" height="7" stroke="#fff"/><path d="M2 4h4v5H2z" fill="#fff"/><circle cx="11" cy="9" r="4.500" fill="#169b3a"/><path d="M11 12V8M9 8.500l2-2 2 2" stroke="#fff"/></svg>
    <svg width="14" height="14" fill="none" stroke="#ddd"><path d="M1 12A11 11 0 0 1 12 2M4 13A8 8 0 0 1 12 5M7 13a5 5 0 0 1 5-5M10 13a2 2 0 0 1 2-2"/></svg>
    <svg width="18" height="14" fill="none" stroke="#fff"><path d="M1.500 5v4h2.500l3 3V2L4 5zM9 5q2 2 0 4M11.500 3q3 4 0 8M14 1.500q5 5.500 0 11"/></svg>
    <span class="lang-ind">ENG</span>
    <time>02:36 PM<br>16-03-2025</time>
    <button class="plain notes" aria-label="Notifications"><svg width="18" height="18"><path d="M1 1h16v12h-8l-3 4v-4H1z" fill="#fff"/><path d="M4 4.500h10M4 7.500h10M4 10.500h6" stroke="#333"/></svg><b>5</b></button>
  </div>
</footer>
<svg class="cursor" width="12" height="19" viewBox="0 0 12 19"><path d="M.5 .5v16l3.800-3.600 2.500 5.600 2.400-1-2.500-5.500H12z" fill="#fff" stroke="#222" stroke-width=".8"/></svg>
</body>
</html>
```

FILE: styles.css
```css
* { box-sizing: border-box; }
body {
  margin: 0; height: 100vh; overflow: hidden;
  display: flex; flex-direction: column;
  background: #141414; color: #fff;
  font: 11px/16px "Open Sans", "Noto Sans", sans-serif;
}
h1, h2, h3, h4, ul { margin: 0; padding: 0; font-size: inherit; font-weight: inherit; }
ul { list-style: none; }
svg { flex: none; }
button, input { font: inherit; color: inherit; }
button { background: none; border: 0; padding: 0; white-space: nowrap; }
input[type="search"] { background: none; border: 0; padding: 0; outline: 0; min-width: 0; flex: 1; appearance: none; }
.plain { display: flex; align-items: center; justify-content: center; }
.defs { position: absolute; }
.ln { fill: none; stroke: #d6d6d6; }
.ln.gray { stroke: #a6a6a6; }
.ln.accent { stroke: #8fc4e8; }

/* title bar */
.titlebar { display: flex; height: 34px; }
.title-left { flex: 0 0 671px; display: flex; align-items: center; padding: 4px 0 0 16px; gap: 14px; white-space: nowrap; color: #d6d6d6; }
.title-left .dim .ln { stroke: #666; }
.doc-title { margin-left: -4px; padding-top: 2px; font-weight: 500; }
.title-left .accent { margin-left: -6px; }
.top-search { flex: 0 1 400px; height: 24px; margin-top: 5px; display: flex; align-items: center; gap: 10px; padding-left: 17px; background: #1f1f1f; border-radius: 2px; font-size: 13px; }
.top-search input::placeholder { color: #b0b0b0; }
.title-right { margin-left: auto; display: flex; align-items: center; color: #d6d6d6; padding-top: 2px; }
.avatar { margin: 0 15px 0 12px; }
.win { width: 44px; height: 30px; }
.sign { height: 30px; }

/* menu */
.menu { display: flex; align-items: center; gap: 24px; height: 36px; padding: 0 7px 0 22px; font-size: 13px; }
.menu a { color: #d6d6d6; text-decoration: none; height: 28px; line-height: 24px; border-bottom: 2px solid transparent; }
.menu .file { margin-right: 10px; }
.menu .on { color: #fff; font-weight: 700; border-color: #2aac94; }
.share { margin: 0 0 4px auto; display: flex; align-items: center; gap: 7px; height: 24px; padding: 0 6px; border-radius: 4px; background: #0f6a5a; color: #c4d4d0; font-size: 12px; }
.share svg:last-child { margin-left: -5px; }

/* ribbon */
.ribbon { flex: none; display: flex; height: 100px; margin: 0 8px; padding: 4px 0; background: #292929; border-radius: 8px; position: relative; font-weight: 500; }
.group { border-right: 1px solid #3d3d3d; display: flex; flex-direction: column; padding-top: 6px; flex: none; }
.tools { display: flex; height: 68px; }
.tools.center { justify-content: center; }
.gname { text-align: center; font-size: 10px; line-height: 18px; font-weight: 600; }
.tool { display: flex; flex-direction: column; align-items: center; gap: 2px; line-height: 16px; }
.off { color: #5c5c5c; }
.chev { width: 8px; height: 8px; }
.g-clip { width: 161px; }
.g-data { width: 361px; }
.g-data .tools { padding-left: 7px; }
.g-query { width: 117px; }
.g-query .tools { padding-left: 9px; }
.g-insert { width: 148px; }
.g-insert .tools { padding-left: 8px; }
.g-calc { width: 188px; }
.g-calc .tools { padding-left: 6px; }
.g-sens { width: 74px; }
.g-one { width: 59px; }
.w-paste { width: 52px; padding-left: 4px; }
.w38 { width: 38px; } .w40 { width: 40px; } .w42 { width: 42px; } .w47 { width: 47px; } .w48 { width: 48px; }
.w50 { width: 50px; } .w54 { width: 54px; } .w56 { width: 56px; } .w58 { width: 58px; } .w74 { width: 74px; }
.clip-list { display: flex; flex-direction: column; align-items: flex-start; gap: 10px; color: #5c5c5c; }
.clip-list button { gap: 4px; height: 16px; }
.collapse { margin: auto 8px 0 auto; height: 18px; width: 10px; }

/* workspace */
.work { flex: 1; min-height: 0; display: flex; border-bottom: 1px solid #666; }
.views { flex: none; width: 41px; border-right: 1px solid #444; }
.views button { width: 40px; height: 40px; border-left: 3px solid transparent; padding-right: 2px; }
.views .on { border-color: #2aac94; }
.dax { font-size: 7px; font-weight: 700; fill: #d6d6d6; stroke: none; }
.center-col { flex: 1; min-width: 0; display: flex; flex-direction: column; }
.stage { flex: 1; min-height: 0; display: flex; background: linear-gradient(#e6e6e6, #fff 8px); }
.canvas { flex: 1; min-width: 0; overflow: hidden; padding: 10px 30px 0; }
.report { height: 520px; background: #5e3467; padding: 10px 11px 0 10px; box-shadow: 0 0 10px rgba(0, 0, 0, .25); color: #252423; }
.banner { height: 50px; line-height: 56px; background: #c497c8; border-bottom: 1px solid #9c6ca3; border-right: 1px solid #9c6ca3; padding-left: 56px; text-align: center; color: #000; font-size: 19px; font-weight: 700; font-style: italic; white-space: pre; }
.visuals { display: flex; gap: 10px; align-items: flex-start; margin-top: 12px; }
.tbl-visual { flex: none; width: 443px; height: 353px; background: #c8b7e5; border-right: 1px solid #9b86bd; padding: 3px 3px 3px 4px; display: flex; gap: 5px; }
.tbl-scroll { flex: 1; overflow: hidden; }
table { table-layout: fixed; border-collapse: separate; border-spacing: 0; width: 425px; height: 354px; font-size: 10px; line-height: 14px; }
.c1 { width: 39px; } .c2 { width: 103px; } .c3 { width: 72px; } .c4 { width: 108px; } .c5 { width: 56px; } .c6 { width: 47px; }
th { height: 26px; padding: 2px 3px 0; vertical-align: top; font-weight: 400; font-size: 11px; line-height: 16px; text-align: right; color: #fff; background: #ef8fc9; border-bottom: 2px solid #b59ae0; white-space: nowrap; }
.l, td:first-child, td:nth-child(n+5) { text-align: left; }
td { padding: 0 3px; text-align: right; white-space: nowrap; background: #f2b2da; border-bottom: 1px solid #ecd0e4; }
tfoot td { position: sticky; bottom: 0; height: 17px; background: #c8b7e5; font-weight: 700; font-size: 11px; border-top: 1px solid #4f8fe0; border-bottom: 0; }
.track { width: 6px; border-radius: 3px; background: #e2d9f2; }
.thumb { height: 64px; border-radius: 3px; background: #938aa5; }
.chart-visual { flex: none; width: 388px; height: 313px; margin-top: 29px; background: #c8b7e5; border-right: 1px solid #8a72a8; border-bottom: 1px solid #8a72a8; font-family: Roboto, "Open Sans", sans-serif; }
.chart-visual h2 { font-size: 11px; line-height: 15px; padding-left: 4px; font-weight: 500; }
.legend { display: flex; gap: 3px; padding-left: 4px; font: 9px/21px "Open Sans", sans-serif; color: #555; }
.legend li::before { content: ""; display: inline-block; width: 7px; height: 7px; border-radius: 50%; background: currentColor; margin-right: 1px; }
.legend .inc::before { background: #1aab40; } .legend .dec::before { background: #d64554; }
.legend .tot::before { background: #118dff; } .legend .oth::before { background: #d9b300; }
.chart { display: block; width: 100%; font: 8px "Open Sans", sans-serif; }
.chart .gridline { stroke: #bcb2cf; stroke-dasharray: 1 5; fill: none; }
.chart .link { stroke: #b3b0b0; fill: none; }
.chart rect { stroke: #b3b0b0; stroke-opacity: .5; }
.chart .inc { fill: #1aab40; } .chart .dec { fill: #d64554; } .chart .tot { fill: #118dff; } .chart .oth { fill: #d9b300; }
.chart .ylab, .chart .xlab { fill: #6b6478; text-anchor: end; }
.chart .axis { font: 400 10px Roboto, sans-serif; fill: #252423; text-anchor: middle; }
.filters { flex: none; width: 34px; border-left: 1px solid #aaa; border-right: 1px solid #555; color: #252423; display: flex; flex-direction: column; align-items: center; padding-top: 14px; gap: 18px; }
.filters span { writing-mode: vertical-rl; font-size: 14px; font-weight: 600; line-height: 20px; margin-top: -8px; }
.flip { transform: scaleX(-1); }

/* page tabs */
.tabs { flex: none; height: 35px; background: #292929; border-right: 1px solid #666; display: flex; }
.tab-tools { width: 128px; border-right: 1px solid #555; display: flex; align-items: center; padding-left: 10px; gap: 14px; }
.desk { width: 24px; height: 30px; border-bottom: 3px solid #2aac94; }
.phone { margin: 0 8px 6px 12px; }
.tab { width: 105px; border-right: 1px solid #4a4a4a; font-size: 11px; font-weight: 500; border-bottom: 4px solid transparent; padding-top: 4px; }
.tab.on { width: 107px; font-weight: 700; border-bottom-color: #2aac94; }
.add { width: 39px; background: #2aac94; }

/* panes */
.pane { flex: none; width: 181px; border-right: 1px solid #666; display: flex; flex-direction: column; }
.pane:last-child { width: 180px; border-right: 0; }
.pane header { display: flex; justify-content: space-between; align-items: center; height: 38px; padding: 0 9px 0 8px; font-size: 14px; font-weight: 700; }
.viz h3 { padding-left: 8px; font-weight: 700; line-height: 16px; margin-bottom: 3px; }
.modes { display: flex; gap: 32px; padding-left: 8px; }
.modes .on { background: #292929; }
.notch { height: 12px; margin-top: 4px; width: 100%; }
.gallery { display: grid; grid-template-columns: repeat(6, 18px); gap: 10px; padding: 8px 0 9px 11px; }
.gallery svg { width: 18px; height: 18px; overflow: visible; fill: none; }
.w { stroke: #d6d6d6; } .dimw { stroke: #888; } .b { stroke: #5ab0f0; } .g2 { stroke: #8a8a8a; }
.f { fill: #0f6cbd; stroke: #62b6f4; } .g { fill: #666; stroke: #8a8a8a; }
.num { font-size: 8px; fill: #5ab0f0; }
.lang { font-size: 16px; font-weight: 600; fill: #3a96dd; }
.wells { border-top: 1px solid #eee; padding: 9px 6px 0 4px; font-weight: 500; }
.wells h4 { padding-left: 8px; line-height: 16px; }
.wells .strong { font-weight: 700; margin: 10px 0 4px; }
.drop { border: 1px dashed #777; height: 28px; line-height: 26px; padding-left: 10px; margin-top: 5px; border-radius: 2px; }
.drop.dark { background: #000; padding-left: 8px; margin-top: 4px; white-space: nowrap; }
.switch-row { display: flex; justify-content: space-between; align-items: center; height: 27px; padding: 0 16px 0 8px; }
.switch { position: relative; width: 32px; height: 16px; }
.switch input { appearance: none; margin: 0; width: 32px; height: 16px; border: 1px solid #aaa; border-radius: 8px; display: flex; align-items: center; padding: 0 4px; }
.switch input::before { content: ""; width: 8px; height: 8px; border-radius: 50%; background: #b8b8b8; }
.switch input:checked { background: #2aac94; border-color: #2aac94; justify-content: flex-end; }
.switch input:checked::before { background: #1c1c1c; }
.switch i { position: absolute; right: 4px; top: 0; font: 9px/16px "Open Sans", sans-serif; color: #b8b8b8; }
.switch input:checked + i { right: auto; left: 5px; color: #0b3b33; }
.data-search { display: flex; align-items: center; gap: 6px; height: 24px; margin: 7px 4px 9px; padding-left: 12px; background: #1f1f1f; border: 1px solid #777; border-radius: 3px; font-size: 12px; }
.data-search input::placeholder { color: #999; }
.fields li { display: flex; align-items: center; height: 24px; padding-left: 15px; gap: 5px; white-space: nowrap; font-weight: 500; }

/* status bar */
.status { flex: none; height: 24px; display: flex; align-items: center; justify-content: space-between; padding: 0 19px 0 4px; border-bottom: 1px solid #000; color: #d6d6d6; }
.zoom { display: flex; align-items: center; gap: 6px; }
.zoom input { appearance: none; margin: 0; width: 100px; height: 11px; background: linear-gradient(#ccc, #ccc) 0 5px / 100% 1px no-repeat, linear-gradient(#ccc, #ccc) 50px 3px / 1px 5px no-repeat; }
.zoom input::-webkit-slider-thumb { appearance: none; width: 4px; height: 11px; background: #d6d6d6; }
.pct { margin: 0 14px 0 8px; }

/* taskbar */
.taskbar { flex: none; height: 40px; display: flex; align-items: center; background: linear-gradient(90deg, #232323 0, #2a2624 22%, #33251f 26%, #3b2a23 36%, #484540 47%, #302e2c 55%, #222 62%, #2b2826 69%, #4b3f33 78%, #34302b 84%, #282828 92%); }
.start { width: 48px; height: 40px; }
.task-search { width: 288px; height: 40px; background: #f2f2f2; border: 1px solid #bbb; display: flex; align-items: center; gap: 10px; padding: 0 4px 0 11px; color: #333; font-size: 14px; }
.task-search input::placeholder { color: #444; }
.apps { display: flex; gap: 1px; }
.app { width: 48px; height: 40px; display: flex; align-items: center; justify-content: center; border-bottom: 2px solid transparent; position: relative; padding-top: 2px; }
.app:first-child { margin-right: 2px; }
.run::after { content: ""; position: absolute; left: 4px; right: 4px; bottom: -2px; height: 2px; background: #c8ab68; }
.cur { background: #555351; }
.cur::after { left: 0; right: 0; }
.tray { margin-left: auto; display: flex; align-items: center; gap: 9px; height: 40px; border-right: 1px solid #666; margin-right: 4px; padding-right: 12px; font-size: 12px; }
.news { gap: 7px; font-size: 13px; margin-right: 16px; }
.tray time { text-align: center; font-size: 11px; line-height: 18px; margin-left: 3px; }
.notes { position: relative; width: 26px; height: 30px; justify-content: flex-start; margin-left: 8px; }
.notes b { position: absolute; left: 8px; top: 13px; width: 16px; height: 16px; border: 1px solid #999; border-radius: 50%; background: #333; font-size: 10px; line-height: 14px; }
.cursor { position: fixed; left: 912px; top: 709px; }
```
